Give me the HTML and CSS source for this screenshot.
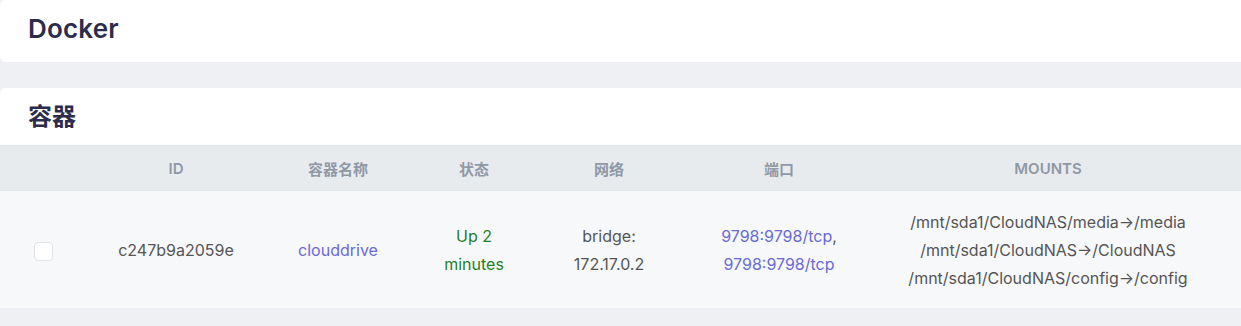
FILE: index.html
```
<!DOCTYPE html>
<html lang="zh-CN">
<head>
    <meta charset="UTF-8">
    <meta name="viewport" content="width=device-width, initial-scale=1.0">
    <title>Docker</title>
    <link rel="stylesheet" href="styles.css">
</head>
<body>
    <div class="card page-head">
        <h1>Docker</h1>
    </div>

    <div class="card containers">
        <h2>容器</h2>
        <table class="list">
            <thead>
                <tr>
                    <th class="col-check"></th>
                    <th class="col-id">ID</th>
                    <th class="col-name">容器名称</th>
                    <th class="col-status">状态</th>
                    <th class="col-net">网络</th>
                    <th class="col-port">端口</th>
                    <th class="col-mounts">MOUNTS</th>
                </tr>
            </thead>
            <tbody>
                <tr>
                    <td class="col-check"><span class="checkbox"></span></td>
                    <td class="col-id">c247b9a2059e</td>
                    <td class="col-name"><a href="#">clouddrive</a></td>
                    <td class="col-status"><span class="up">Up 2<br>minutes</span></td>
                    <td class="col-net">bridge:<br>172.17.0.2</td>
                    <td class="col-port"><a href="#">9798:9798/tcp</a>,<br><a href="#">9798:9798/tcp</a></td>
                    <td class="col-mounts">
                        /mnt/sda1/CloudNAS/media→/media<br>
                        /mnt/sda1/CloudNAS→/CloudNAS<br>
                        /mnt/sda1/CloudNAS/config→/config
                    </td>
                </tr>
            </tbody>
        </table>
    </div>
</body>
</html>
```

FILE: styles.css
```
body {
    margin: 0;
    background: #eef0f3;
    font-family: Inter, "Noto Sans CJK SC", sans-serif;
    color: #555;
    overflow: hidden;
}
.card {
    background: #fff;
    border-radius: 6px 0 0 6px;
    margin-right: -10px;
}
.page-head {
    height: 62px;
    padding-left: 28px;
    box-sizing: border-box;
}
h1 {
    margin: 0;
    padding-top: 13px;
    font-size: 26px;
    font-weight: 600;
    letter-spacing: 0.2px;
    color: #2c2c4c;
    line-height: 32px;
}
.containers {
    margin-top: 26px;
}
h2 {
    margin: 0;
    padding: 14px 28px 0;
    height: 43px;
    font-size: 24px;
    font-weight: 700;
    color: #2c2c4c;
    line-height: 30px;
}
.list {
    width: 1251px;
    border-collapse: collapse;
    table-layout: fixed;
}
.list th,
.list td {
    padding: 0;
}
.list th {
    height: 44px;
    background: #e8ebee;
    border-top: 1px solid #dde1e5;
    border-bottom: 1px solid #dde1e5;
    color: #8e99a5;
    font-size: 15px;
    font-weight: 600;
    text-align: center;
}
.list td {
    height: 117px;
    background: #f7f8f9;
    font-size: 16px;
    line-height: 28px;
    text-align: center;
    color: #555;
}
.list a {
    color: #6a6ad6;
    text-decoration: none;
}
.col-check { width: 86px; }
.col-id { width: 180px; }
.col-name { width: 144px; }
.col-status { width: 128px; }
.col-net { width: 142px; }
.col-port { width: 198px; }
.list .col-mounts {
    padding-right: 33px;
}
.checkbox {
    display: inline-block;
    width: 17px;
    height: 17px;
    border: 1px solid #e0e2e6;
    border-radius: 4px;
    background: #fff;
    vertical-align: middle;
}
.up {
    color: #1f7f26;
}
```
